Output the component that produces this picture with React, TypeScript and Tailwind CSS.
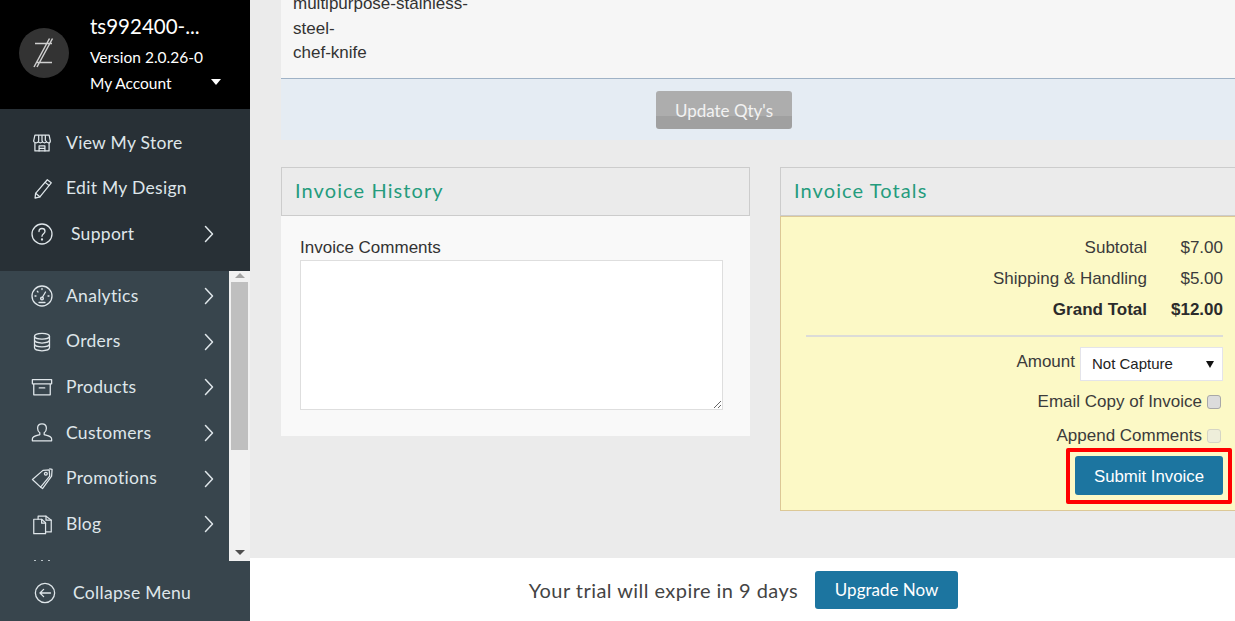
import React from "react";

const muli = "font-['Lato','Noto_Sans',sans-serif]";
const arial = "font-['Liberation_Sans',Arial,sans-serif]";

const S = ({ children, size = 24, sw = 1.3 }: { children: React.ReactNode; size?: number; sw?: number }) => (
  <svg width={size} height={size} viewBox="0 0 24 24" fill="none" stroke="#dfe6ea" strokeWidth={sw} strokeLinecap="round" strokeLinejoin="round">
    {children}
  </svg>
);

const Store = () => (
  <S size={20} sw={1.5}>
    <path d="M3.500 2.500h17l1.500 7c0 1.400-1 2.300-2.300 2.300s-2.200-.9-2.400-1.900c-.1 1-1.200 1.900-2.400 1.900s-2.200-.9-2.400-1.900c-.2 1-1.200 1.900-2.400 1.900s-2.300-.9-2.400-1.900c-.2 1-1.200 1.900-2.400 1.900S2 10.900 2 9.500z" />
    <path d="M8 3v6M12 3v6M16 3v6" />
    <path d="M3.500 12v9.500h17V12" />
    <path d="M8.500 21.500v-6h7v6M8.500 18.500h7" />
  </S>
);
const Pencil = () => (
  <S size={21} sw={1.4}>
    <path d="M17.500 2l4.500 3.500L9 21.500l-5.500 1.500.6-5.500z" />
    <path d="M15 5l4.500 3.500M4.100 17.500l4.900 4" />
  </S>
);
const Help = () => (
  <S size={24}>
    <circle cx="12" cy="12" r="10" />
    <path d="M9 9.500c0-1.800 1.300-3 3-3s3 1.200 3 2.800c0 2.400-3 2.400-3 5" />
    <circle cx="12" cy="17.500" r=".5" />
  </S>
);
const Gauge = () => (
  <S size={24}>
    <circle cx="12" cy="12" r="10" />
    <path d="M12 14l3.500-6" />
    <circle cx="12" cy="14.500" r="1.400" />
    <path d="M9 18.500h6M5 12h1M18 12h1M7.300 7.300l.7.700M12 4.500v1" />
  </S>
);
const Db = () => (
  <S size={20} sw={1.5}>
    <ellipse cx="12" cy="5" rx="9" ry="3.500" />
    <path d="M3 5v14c0 1.900 4 3.500 9 3.500s9-1.600 9-3.500V5" />
    <path d="M3 9.700c0 1.900 4 3.500 9 3.500s9-1.600 9-3.500M3 14.400c0 1.900 4 3.500 9 3.500s9-1.600 9-3.500" />
  </S>
);
const Box = () => (
  <S size={22} sw={1.4}>
    <path d="M1.500 4h21v4.500h-21zM3 8.500v12h18v-12" />
    <path d="M9 13h6" />
  </S>
);
const User = () => (
  <S size={22} sw={1.4}>
    <path d="M12 2c-3 0-4.800 2-4.800 4.800 0 2.200 1 4 2.400 5v2c-2 .8-8.100 1.300-8.100 4.700v2h21v-2c0-3.400-6.100-3.900-8.100-4.700v-2c1.400-1 2.400-2.800 2.400-5C16.800 4 15 2 12 2z" />
  </S>
);
const Tag = () => (
  <S size={23} sw={1.3}>
    <path d="M1.500 13L12.500 3.500l6.500-.5.500 6.500L10 21z" />
    <circle cx="15.500" cy="7" r="1.500" />
    <path d="M19.500 2l2.500.5-.5 7L12 22.500l-2-1.500" />
  </S>
);
const Pages = () => (
  <S size={21} sw={1.4}>
    <path d="M2 6h9l4.500 4v12.500H2z" />
    <path d="M11 6v4.500h4.500" />
    <path d="M7 6V2.500h9l6 4.500v13.500h-6.500" />
    <path d="M16 2.500V7h6" />
  </S>
);
const Back = () => (
  <S size={22} sw={1.4}>
    <circle cx="12" cy="12" r="10.500" />
    <path d="M18 12H6.500M10.500 8l-4 4 4 4" />
  </S>
);
const Chevron = () => (
  <svg width="10" height="18" viewBox="0 0 10 18" fill="none" stroke="#dfe6ea" strokeWidth={1.5} strokeLinecap="round" strokeLinejoin="round">
    <path d="M1.500 1.500L8.500 9l-7 7.500" />
  </svg>
);

const Row = ({ icon, label, chevron = true, gap = "ml-[12px]", right = "mr-[15px]" }: { icon: React.ReactNode; label: string; chevron?: boolean; gap?: string; right?: string }) => (
  <div className={`flex h-[45.7px] items-center pl-[30px] text-[17.500px] tracking-[0.3px] text-[#dfe6ea] ${muli}`}>
    <span className="flex w-[24px] shrink-0 items-center justify-center">{icon}</span>
    <span className={`${gap} flex-1`}>{label}</span>
    {chevron && <span className={`${right} flex`}><Chevron /></span>}
  </div>
);

const Sidebar = () => (
  <aside className={`flex w-[250px] shrink-0 flex-col ${muli}`}>
    <div className="flex h-[109px] bg-black pl-[19px] text-white">
      <div className="mt-[28px] flex h-[50px] w-[50px] items-center justify-center rounded-full bg-[#333333]">
        <svg width="26" height="26" viewBox="0 0 26 26" fill="none" stroke="#cfcfcf" strokeWidth={1.5} className="overflow-visible">
          <path d="M4 3.500h17M5 22.500h16M18.500 -1.500L3 27M21.500 -1.500L6 27" />
        </svg>
      </div>
      <div className="ml-[21px] flex-1">
        <div className="mt-[13px] text-[20.500px] leading-[26px]">ts992400-...</div>
        <div className="mt-[8px] text-[15.500px] leading-[20px]">Version 2.0.26-0</div>
        <div className="mt-[6px] flex items-center text-[15.500px] leading-[20px]">
          <span className="flex-1">My Account</span>
          <span className="mr-[29px] mb-[2px] h-0 w-0 border-x-[5px] border-t-[6px] border-x-transparent border-t-white" />
        </div>
      </div>
    </div>
    <div className="h-[162px] bg-[#283036] pt-[11px]">
      <Row icon={<Store />} label="View My Store" chevron={false} />
      <Row icon={<Pencil />} label="Edit My Design" chevron={false} />
      <Row icon={<Help />} label="Support" gap="ml-[17px]" right="mr-[36px]" />
    </div>
    <div className="flex h-[290px] bg-[#38454d]">
      <div className="h-full w-[229px] overflow-hidden pt-[2px]">
        <Row icon={<Gauge />} label="Analytics" />
        <Row icon={<Db />} label="Orders" />
        <Row icon={<Box />} label="Products" />
        <Row icon={<User />} label="Customers" />
        <Row icon={<Tag />} label="Promotions" />
        <Row icon={<Pages />} label="Blog" />
        <div className="mt-[13px] flex gap-[5px] pl-[34px]">
          <span className="h-[1px] w-[2px] bg-[#b9c3c8]" />
          <span className="h-[1px] w-[2px] bg-[#b9c3c8]" />
          <span className="h-[1px] w-[2px] bg-[#b9c3c8]" />
        </div>
      </div>
      <div className="flex w-[21px] flex-col items-center bg-[#f1f1f1]">
        <span className="mt-[2px] h-0 w-0 border-x-[5px] border-b-[5px] border-x-transparent border-b-[#a3a3a3]" />
        <span className="mt-[4px] h-[168px] w-[17px] bg-[#bfbfbf]" />
        <span className="mt-auto mb-[6px] h-0 w-0 border-x-[5px] border-t-[5px] border-x-transparent border-t-[#505050]" />
      </div>
    </div>
    <div className="flex h-[60px] items-center bg-[#38454d] pl-[34px] text-[17.500px] tracking-[0.3px] text-[#dfe6ea]">
      <span className="mt-[4px] flex"><Back /></span>
      <span className="ml-[17px] mt-[4px]">Collapse Menu</span>
    </div>
  </aside>
);

const Heading = ({ children, className = "" }: { children: React.ReactNode; className?: string }) => (
  <div className={`flex h-[49px] items-center border border-[#cccccc] bg-[#ebebeb] pb-[2px] pl-[13px] text-[20px] tracking-[1.100px] text-[#259c7d] ${muli} ${className}`}>
    {children}
  </div>
);

const TotalLine = ({ label, value, bold = false }: { label: string; value: string; bold?: boolean }) => (
  <div className={`flex h-[31px] items-center justify-end ${bold ? "font-bold text-[#2b2b2b]" : "text-[#3b3b3b]"}`}>
    <span>{label}</span>
    <span className="w-[76px] text-right">{value}</span>
  </div>
);

const Check = ({ faded = false }: { faded?: boolean }) => (
  <span className={`ml-[5px] mr-[2px] inline-block h-[14px] w-[14px] rounded-[3px] border ${faded ? "border-[#d5d5c5] bg-[#eeeeda]" : "border-[#a8a8a8] bg-[#dcdcdc]"}`} />
);

const Main = () => (
  <main className="flex min-w-0 flex-1 flex-col">
    <div className="h-[558px] overflow-hidden bg-[#ebebeb] pl-[31px]">
      <div className={`-mt-[8px] bg-[#f6f6f6] pb-[12px] pl-[12px] text-[17px] leading-[24.500px] text-[#333333] ${arial}`}>
        <div>multipurpose-stainless-</div>
        <div>steel-</div>
        <div>chef-knife</div>
      </div>
      <div className="flex h-[62px] justify-center border-t border-[#9fb2c6] bg-[#e5ecf3] pt-[12px] pr-[68px]">
        <button className={`h-[38px] w-[136px] rounded-[3px] bg-[linear-gradient(#adadad_0%,#adadad_65%,#a0a0a0_65%,#a0a0a0_100%)] pt-[2px] text-[17px] text-[#f2f2f2] ${muli}`}>Update Qty's</button>
      </div>
      <div className="mt-[27px] flex gap-[30px]">
        <section className="w-[469px] shrink-0">
          <Heading>Invoice History</Heading>
          <div className={`h-[220px] bg-[#f9f9f9] pl-[19px] pt-[22px] text-[17px] leading-[20px] text-[#333333] ${arial}`}>
            <div>Invoice Comments</div>
            <textarea className="mt-[2px] block h-[150px] w-[423px] resize border border-[#dedede] bg-white outline-none" />
          </div>
        </section>
        <section className="flex-1">
          <Heading className="border-r-0">Invoice Totals</Heading>
          <div className={`h-[295px] border border-r-0 border-[#dcc896] bg-[#fcf9c6] pr-[12px] pl-[25px] pt-[16px] text-[17px] text-[#3b3b3b] ${arial}`}>
            <TotalLine label="Subtotal" value="$7.00" />
            <TotalLine label="Shipping & Handling" value="$5.00" />
            <TotalLine label="Grand Total" value="$12.00" bold />
            <div className="mt-[9px] h-[2px] bg-[#dcdcd8]" />
            <div className="mt-[10px] flex h-[34px] items-center justify-end">
              <span className="mb-[4px]">Amount</span>
              <div className="ml-[5px] flex h-[34px] w-[143px] items-center justify-between border border-[#e4e4ea] bg-white pl-[11px] pr-[8px] pt-[1px] text-[15px] text-[#222222]">
                <span>Not Capture</span>
                <span className="h-0 w-0 border-x-[4px] border-t-[7px] border-x-transparent border-t-[#111111]" />
              </div>
            </div>
            <div className="mt-[4px] flex h-[34px] items-center justify-end">
              <span>Email Copy of Invoice</span>
              <Check />
            </div>
            <div className="flex h-[34px] items-center justify-end">
              <span>Append Comments</span>
              <Check faded />
            </div>
            <div className="mt-[3px] flex justify-end">
              <div className="relative">
                <button className="block h-[39px] w-[148px] rounded-[3px] bg-[#1c75a0] pt-[4px] text-[16.800px] text-white">Submit Invoice</button>
                <span className="absolute -top-[8px] -right-[9px] -bottom-[9px] -left-[9px] rounded-[2px] border-[4px] border-[#ff0000]" />
              </div>
            </div>
          </div>
        </section>
      </div>
    </div>
    <div className={`flex h-[63px] items-center justify-center gap-[17px] bg-white pt-[1px] pl-[2px] ${muli}`}>
      <span className="text-[20px] tracking-[0.450px] text-[#444444]">Your trial will expire in 9 days</span>
      <button className="h-[38px] w-[143px] rounded-[3px] bg-[#1c75a0] text-[17px] text-white">Upgrade Now</button>
    </div>
  </main>
);

export default function App() {
  return (
    <div className="flex h-[621px] w-[1235px] overflow-hidden bg-white">
      <Sidebar />
      <Main />
    </div>
  );
}
